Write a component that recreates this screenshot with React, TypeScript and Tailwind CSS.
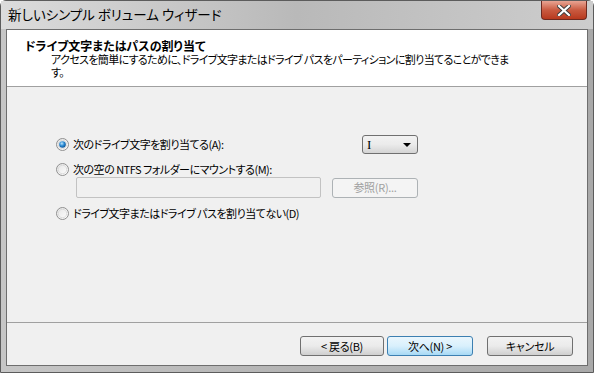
import React from 'react';

const font = { fontFamily: '"Noto Sans CJK JP", "Liberation Sans", sans-serif' };

function Radio({ checked }: { checked?: boolean }) {
  return (
    <svg width="13" height="13" viewBox="0 0 13 13" className="shrink-0">
      <defs>
        <linearGradient id="rb" x1="0" y1="0" x2="1" y2="1">
          <stop offset="0" stopColor="#e4e4e4" />
          <stop offset="1" stopColor="#ffffff" />
        </linearGradient>
        <radialGradient id="rd" cx="0.4" cy="0.35" r="0.7">
          <stop offset="0" stopColor="#bfe6fb" />
          <stop offset="0.5" stopColor="#2a8ad4" />
          <stop offset="1" stopColor="#0b4d8c" />
        </radialGradient>
      </defs>
      <circle cx="6.5" cy="6.5" r="6" fill="url(#rb)" stroke="#8f8f8f" />
      <circle cx="6.5" cy="6.5" r="4.2" fill="none" stroke="#d6d6d6" strokeWidth="0.8" />
      {checked && <circle cx="6.5" cy="6.5" r="3.3" fill="url(#rd)" />}
    </svg>
  );
}

function Button({ label, primary, disabled, className }: { label: string; primary?: boolean; disabled?: boolean; className?: string }) {
  return (
    <div
      className={
        'flex h-[20px] items-center justify-center rounded-[3px] border text-[11px] leading-none tracking-[-0.3px] ' +
        (primary
          ? 'border-[#3c7fb1] bg-gradient-to-b from-[#eaf6fd] via-[#d9f0fc] to-[#a7d9f5] text-black'
          : disabled
            ? 'border-[#adb2b5] bg-[#f4f4f4] text-[#a0a0a0]'
            : 'border-[#707070] bg-gradient-to-b from-[#f2f2f2] via-[#ebebeb] to-[#cfcfcf] text-black') +
        ' ' +
        (className ?? '')
      }
    >
      {label}
    </div>
  );
}

export default function App() {
  return (
    <div
      className="h-[373px] w-[594px] overflow-hidden bg-white [font-feature-settings:'palt']"
      style={font}
    >
      <div className="flex h-full w-full flex-col rounded-t-[6px] border border-[#5c5c5c] bg-gradient-to-r from-[#c6c6c6] via-[#b4b4b4] to-[#a9a9a9]">
        {/* title bar */}
        <div className="flex h-[28px] shrink-0 items-start justify-between bg-gradient-to-r from-[#dcdcdc] via-[#b9b9b9] to-[#cdcdcd] pl-[7px] pr-[6px]">
          <span className="mt-[5px] text-[13.5px] leading-[16px] text-black">新しいシンプル ボリューム ウィザード</span>
          <div className="flex h-[19px] w-[46px] items-center justify-center rounded-b-[4px] border border-t-0 border-[#6d2a20] bg-gradient-to-b from-[#e8a493] via-[#c95a40] to-[#b8391d]">
            <svg width="14" height="11" viewBox="0 0 14 11">
              <path d="M2 1 L12 10 M12 1 L2 10" stroke="#3b3b3b" strokeWidth="4" strokeLinecap="square" />
              <path d="M2 1 L12 10 M12 1 L2 10" stroke="#ffffff" strokeWidth="2.2" strokeLinecap="square" />
            </svg>
          </div>
        </div>

        {/* client area */}
        <div className="mx-[5px] mb-[6px] flex flex-1 flex-col border border-[#6e6e6e] bg-[#f0f0f0]">
          <div className="flex h-[57px] shrink-0 flex-col border-b border-[#a0a0a0] bg-white pl-[18px] pt-[8px] text-black">
            <div className="text-[12px] font-bold leading-[15px]">ドライブ文字またはパスの割り当て</div>
            <div className="pl-[26px] text-[11px] leading-[13px] tracking-[-0.65px]">
              アクセスを簡単にするために、ドライブ文字またはドライブ パスをパーティションに割り当てることができま
              <br />
              す。
            </div>
          </div>

          <div className="flex flex-1 flex-col pl-[49px] pt-[48px] text-[11px] tracking-[-0.5px] text-black">
            <div className="flex h-[19px] items-center">
              <Radio checked />
              <span className="ml-[4px] w-[289px]">次のドライブ文字を割り当てる(A):</span>
              <div className="flex h-[19px] w-[56px] items-center justify-between rounded-[3px] border border-[#707070] bg-gradient-to-b from-[#f2f2f2] via-[#ebebeb] to-[#d4d4d4] pl-[4px] pr-[6px]">
                <span className="font-['Liberation_Serif',serif] text-[13px] leading-none">I</span>
                <svg width="8" height="4" viewBox="0 0 8 4">
                  <path d="M0 0 H8 L4 4 Z" fill="#000" />
                </svg>
              </div>
            </div>
            <div className="mt-[8px] flex h-[14px] items-center">
              <Radio />
              <span className="ml-[4px]">次の空の NTFS フォルダーにマウントする(M):</span>
            </div>
            <div className="mt-[1px] flex items-center pl-[20px]">
              <div className="h-[21px] w-[245px] rounded-[2px] border border-[#c2c2c2] bg-[#f0f0f0]" />
              <Button label="参照(R)..." disabled className="ml-[11px] w-[86px]" />
            </div>
            <div className="mt-[8px] flex h-[14px] items-center">
              <Radio />
              <span className="ml-[4px]">ドライブ文字またはドライブ パスを割り当てない(D)</span>
            </div>
          </div>

          <div className="flex h-[43px] shrink-0 items-start border-t border-[#a0a0a0] pl-[293px] pt-[13px]">
            <Button label="< 戻る(B)" className="w-[84px]" />
            <Button label="次へ(N) >" primary className="ml-[3px] w-[86px]" />
            <Button label="キャンセル" className="ml-[14px] w-[86px]" />
          </div>
        </div>
      </div>
    </div>
  );
}
